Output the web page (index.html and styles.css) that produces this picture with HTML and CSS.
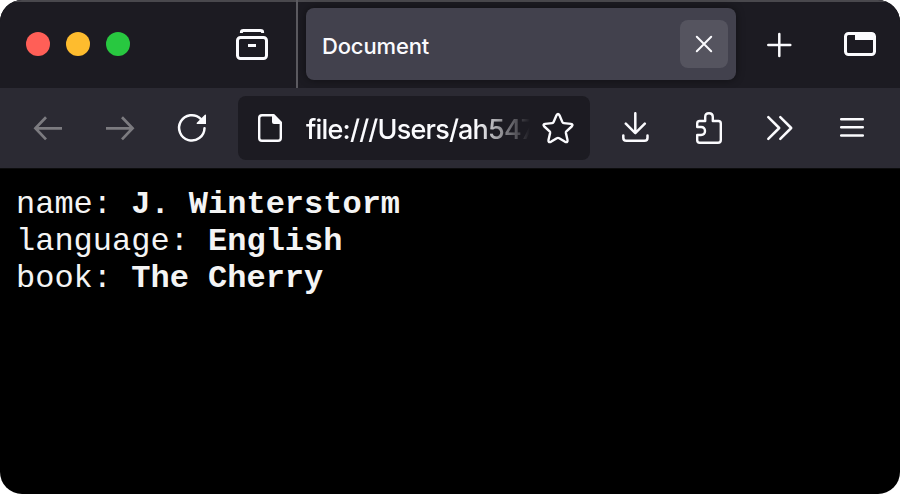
FILE: index.html
```html
<!DOCTYPE html>
<html lang="en">
<head>
<meta charset="utf-8">
<title>Document</title>
<link rel="stylesheet" href="styles.css">
</head>
<body>
<div class="window">
  <header class="tabbar">
    <div class="lights"><i class="light red"></i><i class="light yellow"></i><i class="light green"></i></div>
    <svg class="icon archive" viewBox="0 0 32 32"><path d="M5.4 5V4.2Q5.4 2.4 7.4 2.4H24.6Q26.6 2.4 26.6 4.2V5" stroke-width="3" stroke-linecap="butt"/><rect x="1.5" y="9.5" width="29" height="21" rx="3" stroke-width="3"/><path d="M12 17.5H20" stroke-width="3" stroke-linecap="butt"/></svg>
    <div class="divider"></div>
    <div class="tab">
      <span class="title">Document</span>
      <button class="close" aria-label="Close"><svg class="icon small" viewBox="0 0 18 18"><path d="M1.8 1.8 16.2 16.2M16.2 1.8 1.8 16.2" stroke-width="2"/></svg></button>
    </div>
    <svg class="icon plus" viewBox="0 0 32 32"><path d="M16.3 6V28M5.3 17H27.3" stroke-width="2.5"/></svg>
    <svg class="icon alltabs" viewBox="0 0 32 32"><rect x="1.5" y="5.5" width="29" height="21" rx="3" stroke-width="3"/><path class="solid" d="M11 5H29Q31 5 31 7V12H11Z"/></svg>
  </header>
  <nav class="toolbar">
    <svg class="icon back dim" viewBox="0 0 32 32"><path d="M14 5.2 3.4 16.3 14 27.4M3 16.3H30" stroke-width="2.7" stroke-linecap="butt"/></svg>
    <svg class="icon forward dim" viewBox="0 0 32 32"><path d="M18 5.2 28.6 16.3 18 27.4M29 16.3H2" stroke-width="2.7" stroke-linecap="butt"/></svg>
    <svg class="icon reload" viewBox="0 0 32 32"><path d="M28.5 16.2A12.7 12.7 0 1 1 24.7 6.8" stroke-width="2.5"/><path class="solid" d="M30 3V12H21Q20.2 11.5 20.8 10.8L28.9 2.8Q29.7 2.2 30 3Z"/></svg>
    <div class="urlbar">
      <svg class="icon page" viewBox="0 0 32 32"><path d="M8 3.2H19.5L26.8 10.5V26Q26.8 28.8 24 28.8H8Q5.2 28.8 5.2 26V6Q5.2 3.2 8 3.2Z" stroke-width="2.4"/><path class="solid" d="M18 2.5H20L27.8 10.2V12H20Q18 12 18 10Z"/></svg>
      <span class="url">file:///Users/ah547</span>
      <svg class="icon star" viewBox="0 0 32 32"><path d="M14.5 3.3Q16 .6 17.5 3.3L20.4 10.1Q20.8 11 21.8 11.1L28.9 11.9Q31.6 12.4 29.7 14.5L24.4 19.3Q23.7 20 23.9 21L25.5 28Q25.8 31 23.1 29.8L17.2 26.2Q16 25.5 14.8 26.2L8.9 29.8Q6.2 31 6.5 28L8.1 21Q8.3 20 7.6 19.3L2.3 14.5Q.4 12.4 3.1 11.9L10.2 11.1Q11.2 11 11.6 10.1Z" stroke-width="2.4"/></svg>
    </div>
    <svg class="icon download" viewBox="0 0 32 32"><path d="M16.3 1.2V21M6.8 11.7 16.3 21.2 25.8 11.7M4.3 23.5V25.7Q4.3 28.8 7.4 28.8H25.4Q28.5 28.8 28.5 25.7V23.5" stroke-width="2.5"/></svg>
    <svg class="icon puzzle" viewBox="0 0 32 32"><path d="M5.2 15V11.5Q5.2 9 7.7 9H13.2V5Q13.2 1.2 17 1.2T20.8 5V9H26.3Q28.8 9 28.8 11.5V28Q28.8 30.8 26 30.8H7.7Q5.2 30.8 5.2 28.3V23H9Q13 23 13 19T9 15Z" stroke-width="2.4"/></svg>
    <svg class="icon more" viewBox="0 0 32 32"><path d="M5.3 5.2 16.2 16 5.3 26.8M17.3 5.2 28.2 16 17.3 26.8" stroke-width="2.5"/></svg>
    <svg class="icon menu" viewBox="0 0 32 32"><path d="M5.2 7.2H26.8M5.2 15.3H26.8M5.2 23.4H26.8" stroke-width="2.5"/></svg>
  </nav>
  <main class="page-content">
    <div>name: <b>J. Winterstorm</b></div>
    <div>language: <b>English</b></div>
    <div>book: <b>The Cherry</b></div>
  </main>
</div>
</body>
</html>
```
FILE: styles.css
```css
* { box-sizing: border-box; }
body { margin: 0; background: #fff; }
.window {
  height: 494px;
  display: flex;
  flex-direction: column;
  background: #000;
  border-radius: 22px;
  overflow: hidden;
  font-family: Inter, "Liberation Sans", sans-serif;
  color: #fbfbfe;
}
.tabbar {
  height: 88px;
  flex: none;
  display: flex;
  align-items: center;
  background: #1c1b22;
  box-shadow: inset 0 2px #49484d;
}
.lights { display: flex; gap: 16px; margin-left: 26px; }
.light { width: 24px; height: 24px; border-radius: 50%; }
.red { background: #ff5f57; }
.yellow { background: #febc2e; }
.green { background: #28c840; }
.icon {
  width: 32px;
  height: 32px;
  flex: none;
  display: block;
  fill: none;
  stroke: #fbfbfe;
  stroke-linecap: round;
  stroke-linejoin: round;
}
.icon .solid { fill: #fbfbfe; stroke: none; }
.dim { stroke: #7c7b80; stroke-linejoin: miter; }
.archive { margin-left: 106px; }
.divider { width: 2px; height: 88px; margin-left: 28px; background: #5b5a60; }
.tab {
  width: 430px;
  height: 72px;
  margin-left: 8px;
  padding: 0 8px 0 16px;
  display: flex;
  align-items: center;
  justify-content: space-between;
  background: #42414d;
  border-radius: 8px;
  box-shadow: 0 0 8px rgba(0, 0, 0, .45);
}
.title { font-size: 22px; font-weight: 500; line-height: 28px; padding-top: 3px; letter-spacing: -.15px; }
.close {
  width: 48px;
  height: 48px;
  padding: 0;
  border: 0;
  border-radius: 8px;
  background: #55545f;
  display: flex;
  align-items: center;
  justify-content: center;
}
.small { width: 18px; height: 18px; }
.plus { margin-left: 27px; }
.alltabs { margin-left: 49px; }
.toolbar {
  height: 81px;
  flex: none;
  display: flex;
  align-items: center;
  padding-left: 32px;
  background: #2b2a33;
  border-bottom: 1px solid #0c0c0d;
}
.forward, .reload { margin-left: 40px; }
.urlbar {
  width: 352px;
  height: 64px;
  margin-left: 30px;
  padding: 0 16px;
  display: flex;
  align-items: center;
  background: #1c1b22;
  border-radius: 8px;
}
.url {
  width: 236px;
  margin: 3px 0 0 20px;
  font-size: 27px;
  font-weight: 500;
  letter-spacing: -.8px;
  line-height: 36px;
  white-space: nowrap;
  -webkit-mask-image: linear-gradient(to right, #000 170px, transparent 224px);
  mask-image: linear-gradient(to right, #000 170px, transparent 224px);
}
.download { margin-left: 29px; }
.puzzle { margin-left: 41px; }
.more { margin-left: 39px; }
.menu { margin-left: 41px; }
.page-content {
  padding: 17px 16px;
  font: 32px/37px "Courier New", "Liberation Mono", monospace;
  color: #f4f4f4;
}
```
